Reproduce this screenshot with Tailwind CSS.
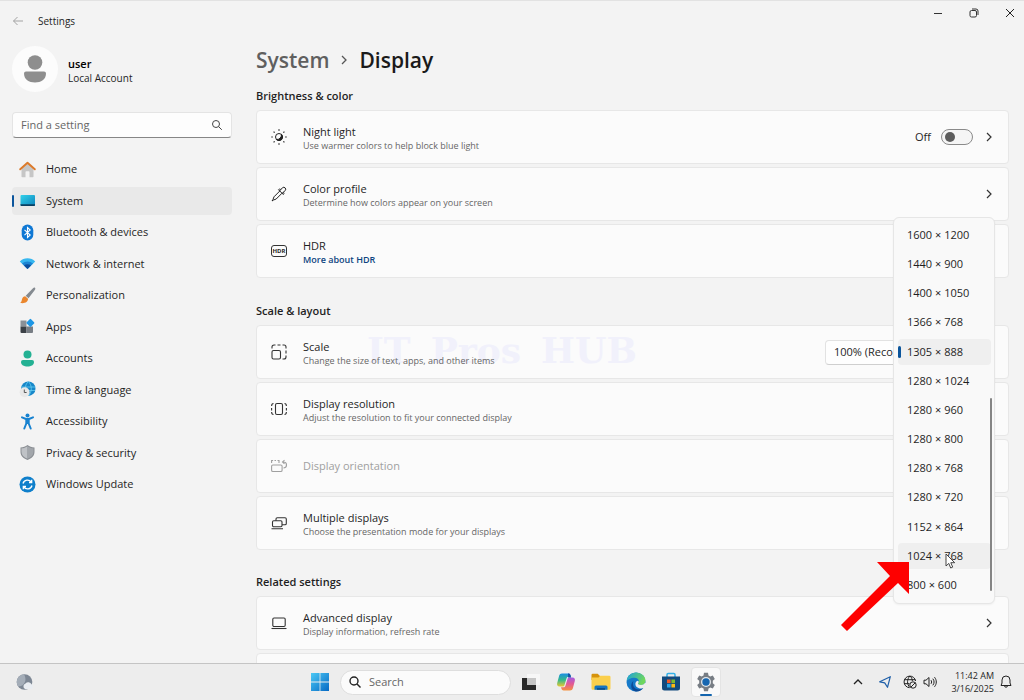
<!DOCTYPE html>
<html lang="en">
<head>
  <meta charset="UTF-8">
  <meta name="viewport" content="width=device-width, initial-scale=1.0">
  <title>Settings - Display</title>
  <script src="https://cdn.jsdelivr.net/npm/@tailwindcss/browser@4"></script>
</head>
<body class="relative h-screen overflow-hidden flex flex-col bg-[#f3f3f3] text-[#1f1f1f] font-['Open_Sans','Noto_Sans',sans-serif] text-[11px] leading-4">

  <!-- Title bar -->
  <header class="h-10 shrink-0 flex justify-between border-t border-[#e2e2e2]">
    <div class="flex items-center gap-[14px] pl-3">
      <button aria-label="Back" class="text-[#a3a3a3]">
        <svg width="12" height="12" viewBox="0 0 12 12" fill="none" stroke="currentColor"><path d="M11 6H1.5M5.5 2 1.5 6l4 4"/></svg>
      </button>
      <span class="text-[10px]">Settings</span>
    </div>
    <div class="flex h-6 items-center gap-[26px] pr-[9px]">
      <button aria-label="Minimize"><svg width="10" height="10" viewBox="0 0 10 10" stroke="#333"><path d="M1 5.5h8"/></svg></button>
      <button aria-label="Restore"><svg width="10" height="10" viewBox="0 0 10 10" fill="none" stroke="#333"><rect x="1" y="2.5" width="6.5" height="6.5" rx="1.5"/><path d="M3 1h4a2 2 0 0 1 2 2v4"/></svg></button>
      <button aria-label="Close"><svg width="10" height="10" viewBox="0 0 10 10" stroke="#222"><path d="m1 1 8 8M9 1 1 9"/></svg></button>
    </div>
  </header>

  <div class="flex-1 min-h-0 flex">
    <!-- Sidebar -->
    <aside class="w-[244px] shrink-0 px-3 pt-1.5">
      <div class="flex items-center gap-[10px]">
        <div class="size-[46px] rounded-full bg-[#fcfcfc] flex items-center justify-center">
          <svg width="24" height="28" viewBox="0 0 24 28" fill="#8e8e8e"><circle cx="12" cy="7.5" r="7.3"/><path d="M3 16.5h18a2 2 0 0 1 2 2c0 6-5 9-11 9s-11-3-11-9a2 2 0 0 1 2-2z"/></svg>
        </div>
        <div class="pt-1 text-[10px] leading-[14px]">
          <p class="text-[11px] font-semibold text-black">user</p>
          <p>Local Account</p>
        </div>
      </div>

      <label class="mt-5 h-[26px] px-2 flex items-center rounded bg-[#fdfdfd] border border-[#e4e4e4] border-b-[#868686]">
        <input type="text" aria-label="Find a setting" placeholder="Find a setting" class="flex-1 min-w-0 outline-none bg-transparent placeholder:text-[#666]">
        <svg width="12" height="12" viewBox="0 0 12 12" fill="none" stroke="#444"><circle cx="5" cy="5" r="3.5"/><path d="m7.6 7.6 3.2 3.2"/></svg>
      </label>

      <nav class="mt-[17px] h-[343px] flex flex-col justify-between">
        <a href="#" class="h-7 pl-[7px] flex items-center gap-[10px] rounded">
          <svg width="17" height="17" viewBox="0 0 17 17"><path d="M2.5 7 8.500 2l6 5v8.500a.8.800 0 0 1-.8.800h-3.200V11a.8.800 0 0 0-.8-.8H7.300a.8.800 0 0 0-.8.800v5.300H3.300a.8.800 0 0 1-.8-.8z" fill="#c6c6c6"/><path d="M1.200 8.300 8.500 1.700l7.300 6.600" fill="none" stroke="#dc7a2a" stroke-width="1.900" stroke-linecap="round" stroke-linejoin="round"/></svg>
          Home
        </a>
        <a href="#" aria-current="page" class="relative h-7 pl-[7px] flex items-center gap-[10px] rounded bg-[#e9e9e9]">
          <span class="absolute left-0 top-2 h-3 w-0.5 rounded bg-[#0b559c]"></span>
          <svg width="17" height="17" viewBox="0 0 17 17"><defs><linearGradient id="scr" x2="1" y2="1"><stop stop-color="#32d2ea"/><stop offset="1" stop-color="#0d83bd"/></linearGradient></defs><rect x="1.500" y="3" width="14.500" height="11" rx="1" fill="url(#scr)"/><path d="M1.500 12.300H16V13a1 1 0 0 1-1 1H2.500a1 1 0 0 1-1-1z" fill="#0a3f62"/></svg>
          System
        </a>
        <a href="#" class="h-7 pl-[7px] flex items-center gap-[10px] rounded">
          <svg width="17" height="17" viewBox="0 0 17 17"><rect x="2.700" y=".5" width="11.600" height="16" rx="5.800" fill="#0f78d4"/><path d="m5.500 5.800 5.700 5.200-2.700 2.500v-10l2.700 2.500-5.700 5.200" fill="none" stroke="#fff" stroke-width="1.100"/></svg>
          Bluetooth &amp; devices
        </a>
        <a href="#" class="h-7 pl-[7px] flex items-center gap-[10px] rounded">
          <svg width="17" height="17" viewBox="0 0 17 17"><path d="M.8 6.500a11 11 0 0 1 15.400 0L8.500 14z" fill="#37b7ef"/><path d="M3 8.600a8 8 0 0 1 11 0L8.500 14z" fill="#1b84d2"/><path d="M5 10.600a5 5 0 0 1 7 0L8.500 14z" fill="#0c4d9c"/></svg>
          Network &amp; internet
        </a>
        <a href="#" class="h-7 pl-[7px] flex items-center gap-[10px] rounded">
          <svg width="17" height="17" viewBox="0 0 17 17"><path d="M16 .8c.6.600.3 1.500-.2 2.200L9.500 11.300 6.700 8.800 14 1.300c.6-.6 1.400-1 2-.5z" fill="#848a90"/><path d="M6.200 9.200 9 11.700c.2 3.200-3.500 5.300-8 4.100 1.600-.6 1.700-2 2-3.500.4-1.900 1.700-3 3.200-3.100z" fill="#ea862d"/></svg>
          Personalization
        </a>
        <a href="#" class="h-7 pl-[7px] flex items-center gap-[10px] rounded">
          <svg width="17" height="17" viewBox="0 0 17 17"><path d="M1.500 2.500h6v6h-6z" fill="#8a9097"/><path d="M1.500 8.500h6v6.500h-5a1 1 0 0 1-1-1z" fill="#3b4046"/><path d="M7.500 8.500H14V14a1 1 0 0 1-1 1H7.500z" fill="#777d84"/><rect x="8.300" y="1.800" width="6.200" height="6.200" rx="1" transform="rotate(45 11.400 4.900)" fill="#1d96e4"/></svg>
          Apps
        </a>
        <a href="#" class="h-7 pl-[7px] flex items-center gap-[10px] rounded">
          <svg width="17" height="17" viewBox="0 0 17 17" fill="#23b193"><circle cx="8.500" cy="4.500" r="4"/><path d="M4 10h9a2 2 0 0 1 2 2c0 3-3 4.500-6.500 4.500S2 15 2 12a2 2 0 0 1 2-2z"/></svg>
          Accounts
        </a>
        <a href="#" class="h-7 pl-[7px] flex items-center gap-[10px] rounded">
          <svg width="17" height="17" viewBox="0 0 17 17"><circle cx="9.300" cy="7.700" r="7.200" fill="#1787c9"/><path d="M2.500 6h13.700M3 9.500h13M9.300.500c-4 4-4 10 0 14.400 4-4.400 4-10.400 0-14.400z" fill="none" stroke="#67cdf0" stroke-width=".8"/><circle cx="5.600" cy="11.200" r="5" fill="#e8e8e8"/><path d="M5.300 8.500v3h2.300" fill="none" stroke="#555" stroke-width="1"/></svg>
          Time &amp; language
        </a>
        <a href="#" class="h-7 pl-[7px] flex items-center gap-[10px] rounded">
          <svg width="17" height="17" viewBox="0 0 17 17"><circle cx="8.500" cy="2.500" r="2" fill="#1782d0"/><path d="M3 4.300 7 6h3l4-1.700M8.500 6v4M7.300 6v4.500L5.300 15.500M9.700 6v4.500l2 5" fill="none" stroke="#1782d0" stroke-width="2" stroke-linecap="round" stroke-linejoin="round"/></svg>
          Accessibility
        </a>
        <a href="#" class="h-7 pl-[7px] flex items-center gap-[10px] rounded">
          <svg width="17" height="17" viewBox="0 0 17 17"><path d="M8.500 1c2 1.500 4.300 2.300 7 2.400v4.400c0 4-2.600 6.500-7 8.200-4.400-1.700-7-4.200-7-8.200V3.400c2.700-.1 5-.9 7-2.400z" fill="#8a8e93"/><path d="M8.500 2.200v12.600c-3.700-1.500-6-3.700-6-7V4.300c2.300-.1 4.300-.9 6-2.100z" fill="#bfc2c6"/><path d="M8.500 2.200v12.600c3.700-1.500 6-3.700 6-7V4.300c-2.300-.1-4.300-.9-6-2.100z" fill="#a2a6ab"/></svg>
          Privacy &amp; security
        </a>
        <a href="#" class="h-7 pl-[7px] flex items-center gap-[10px] rounded">
          <svg width="17" height="17" viewBox="0 0 17 17"><circle cx="8.500" cy="8.500" r="8" fill="#0f7fcb"/><path d="M4 7.500a4.600 4.600 0 0 1 8.300-1.300M12.700 3.800v2.700H10M13 9.500a4.600 4.600 0 0 1-8.300 1.300M4.300 13.200v-2.700H7" fill="none" stroke="#fff" stroke-width="1.300"/></svg>
          Windows Update
        </a>
      </nav>
    </aside>

    <!-- Page content -->
    <main class="flex-1 min-w-0 pl-3 pr-[15px]">
      <h1 class="h-10 flex items-center gap-[11px] text-[21px] leading-7 font-semibold text-[#1a1a1a]">
        <a href="#" class="text-[#5f5f5f]">System</a>
        <svg width="8" height="10" viewBox="0 0 8 10" fill="none" stroke="#555" stroke-width="1.300"><path d="m2 1 4 4-4 4"/></svg>
        Display
      </h1>

      <h2 class="mt-2 mb-1.5 font-semibold">Brightness &amp; color</h2>
      <div class="flex flex-col gap-[3px]">
        <section class="h-[54px] pl-[14px] pr-[13px] flex items-center gap-4 rounded bg-[#fbfbfb] border border-[#e7e7e7]">
          <svg width="16" height="16" viewBox="0 0 16 16" fill="none" stroke="#222"><circle cx="8" cy="8" r="3.500"/><path d="M10.500 5.500a3.500 3.500 0 1 1-5 5c3 .2 5-2 5-5z" fill="#222"/><path d="M8 .3v1.500M8 14.200v1.500M.3 8h1.500M14.200 8h1.500M2.600 2.600l1 1M12.400 12.400l1 1M13.400 2.600l-1 1M3.600 12.400l-1 1" stroke-width="1.200"/></svg>
          <div class="flex-1 pt-[3px] leading-[14px]">
            <h3 id="night-light">Night light</h3>
            <p class="text-[9px] text-[#666]">Use warmer colors to help block blue light</p>
          </div>
          <div class="flex items-center gap-[10px]">
            <span>Off</span>
            <button role="switch" aria-checked="false" aria-labelledby="night-light" class="w-8 h-4 px-[3px] flex items-center rounded-full border border-[#8a8a8a] bg-[#f5f5f5]"><span class="size-2.5 rounded-full bg-[#5c5c5c]"></span></button>
            <svg width="12" height="12" viewBox="0 0 12 12" fill="none" stroke="#333" stroke-width="1.200"><path d="m4 2 4 4-4 4"/></svg>
          </div>
        </section>
        <section class="h-[54px] pl-[14px] pr-[13px] flex items-center gap-4 rounded bg-[#fbfbfb] border border-[#e7e7e7]">
          <svg width="16" height="16" viewBox="0 0 16 16" fill="none" stroke="#222" stroke-linejoin="round"><path d="M8.800 5 3 10.800 1.900 13.700l-.9 1.300 1.300-.9 2.900-1.100L11 7.200M7.500 3.700l4.800 4.800M8.700 4.900l2.800-3.200a2 2 0 0 1 2.800 2.800L11.100 7.300"/><path d="M7.500 3.700c.8-.9 1.600-.7 2.300-.1M12.300 8.500c.9-.8.7-1.600.1-2.300"/></svg>
          <div class="flex-1 pt-[3px] leading-[14px]">
            <h3>Color profile</h3>
            <p class="text-[9px] text-[#666]">Determine how colors appear on your screen</p>
          </div>
          <svg width="12" height="12" viewBox="0 0 12 12" fill="none" stroke="#333" stroke-width="1.200"><path d="m4 2 4 4-4 4"/></svg>
        </section>
        <section class="h-[54px] pl-[14px] pr-4 flex items-center gap-4 rounded bg-[#fbfbfb] border border-[#e7e7e7]">
          <span class="w-4 h-3 flex items-center justify-center rounded-[3px] border border-[#333] text-[6px] leading-none font-bold">HDR</span>
          <div class="flex-1 pt-[3px] leading-[14px]">
            <h3>HDR</h3>
            <a href="#" class="block text-[9px] font-semibold text-[#0c4480]">More about HDR</a>
          </div>
        </section>
      </div>

      <h2 class="mt-[25px] mb-1.5 font-semibold">Scale &amp; layout</h2>
      <div class="flex flex-col gap-[3px]">
        <section class="relative h-[54px] pl-[14px] pr-4 flex items-center gap-4 rounded bg-[#fbfbfb] border border-[#e7e7e7]">
          <div aria-hidden="true" class="absolute left-[110px] top-1 flex gap-5 font-['DejaVu_Serif',serif] font-bold text-[36px] leading-10 text-[#f1f1fb]"><span>IT</span><span>Pros</span><span>HUB</span></div>
          <svg width="16" height="16" viewBox="0 0 16 16" fill="none" stroke="#333" stroke-width="1.100"><rect x="1" y="6.500" width="8.500" height="8.500" rx="1.500"/><path d="M1 4.500V3a2 2 0 0 1 2-2h1.500M6.500 1h3M11.500 1H13a2 2 0 0 1 2 2v1.500M15 6.500v3M15 11.500V13a2 2 0 0 1-2 2h-1.500"/></svg>
          <div class="relative flex-1 pt-[3px] leading-[14px]">
            <h3 id="scale">Scale</h3>
            <p class="text-[9px] text-[#666]">Change the size of text, apps, and other items</p>
          </div>
          <select aria-labelledby="scale" class="appearance-none w-[167px] h-[25px] pl-2 rounded border border-[#e2e2e2] border-b-[#cfcfcf] bg-[#fefefe]">
            <option>100% (Recommended)</option>
          </select>
        </section>
        <section class="h-[54px] pl-[14px] pr-4 flex items-center gap-4 rounded bg-[#fbfbfb] border border-[#e7e7e7]">
          <svg width="16" height="16" viewBox="0 0 16 16" fill="none" stroke="#333" stroke-width="1.100"><rect x="4.500" y="2.500" width="7" height="11" rx="1.500"/><path d="M2.500 2.500C1 2.500.600 3.200.600 5M.600 7v2.500M.600 11c0 1.800.4 2.500 1.900 2.500M13.500 2.500c1.500 0 1.900.7 1.900 2.500M15.400 7v2.500M15.400 11c0 1.800-.4 2.500-1.900 2.500"/></svg>
          <div class="flex-1 pt-[3px] leading-[14px]">
            <h3>Display resolution</h3>
            <p class="text-[9px] text-[#666]">Adjust the resolution to fit your connected display</p>
          </div>
        </section>
        <section class="h-[54px] pl-[14px] pr-4 flex items-center gap-4 rounded bg-[#fbfbfb] border border-[#e7e7e7] text-[#a0a0a0]">
          <svg width="16" height="16" viewBox="0 0 16 16" fill="none" stroke="currentColor" stroke-width="1.100"><rect x=".6" y="7" width="10.500" height="6.500" rx="1.300"/><path d="M.600 5V2.500h1.500M3.500 2.500h1.500M6.500 2.500H8V5M13.500 2.200l-2 1.800 2 1.800M11.700 4h.8a2.800 2.800 0 0 1 0 6"/></svg>
          <h3 class="flex-1 leading-[14px]">Display orientation</h3>
        </section>
        <section class="h-[54px] pl-[14px] pr-4 flex items-center gap-4 rounded bg-[#fbfbfb] border border-[#e7e7e7]">
          <svg width="16" height="16" viewBox="0 0 16 16" fill="none" stroke="#333" stroke-width="1.100"><rect x="1.500" y="5.800" width="9.500" height="6" rx="1.200"/><path d="M.500 13.700h11.500M5 5.800V4a1.300 1.300 0 0 1 1.300-1.300h7.700A1.300 1.300 0 0 1 15.300 4v4.500A1.300 1.300 0 0 1 14 9.800h-3"/></svg>
          <div class="flex-1 pt-[3px] leading-[14px]">
            <h3>Multiple displays</h3>
            <p class="text-[9px] text-[#666]">Choose the presentation mode for your displays</p>
          </div>
        </section>
      </div>

      <h2 class="mt-6 mb-1.5 font-semibold">Related settings</h2>
      <div class="flex flex-col gap-[3px]">
        <section class="h-[54px] pl-[14px] pr-[13px] flex items-center gap-4 rounded bg-[#fbfbfb] border border-[#e7e7e7]">
          <svg width="16" height="16" viewBox="0 0 16 16" fill="none" stroke="#333" stroke-width="1.100"><rect x="1.800" y="3" width="12.400" height="8.500" rx="1.200"/><path d="M.500 13.500h15"/></svg>
          <div class="flex-1 pt-[3px] leading-[14px]">
            <h3>Advanced display</h3>
            <p class="text-[9px] text-[#666]">Display information, refresh rate</p>
          </div>
          <svg width="12" height="12" viewBox="0 0 12 12" fill="none" stroke="#333" stroke-width="1.200"><path d="m4 2 4 4-4 4"/></svg>
        </section>
        <section class="h-[54px] rounded bg-[#fbfbfb] border border-[#e7e7e7]"></section>
      </div>
    </main>
  </div>

  <!-- Resolution list -->
  <div class="absolute right-[29px] top-[217px] w-[102px] h-[387px] py-1 pl-1 pr-[3px] flex rounded-md bg-[#f9f9f9] border border-[#e6e6e6] shadow-xs">
    <div role="listbox" aria-label="Display resolution" class="flex-1 h-[376px] flex flex-col justify-between">
      <button role="option" class="h-[26px] pl-[9px] text-left rounded">1600 × 1200</button>
      <button role="option" class="h-[26px] pl-[9px] text-left rounded">1440 × 900</button>
      <button role="option" class="h-[26px] pl-[9px] text-left rounded">1400 × 1050</button>
      <button role="option" class="h-[26px] pl-[9px] text-left rounded">1366 × 768</button>
      <button role="option" aria-selected="true" class="relative h-[26px] pl-[9px] text-left rounded bg-[#efefef]"><span class="absolute left-0 top-[7px] h-3 w-[3px] rounded bg-[#0b559c]"></span>1305 × 888</button>
      <button role="option" class="h-[26px] pl-[9px] text-left rounded">1280 × 1024</button>
      <button role="option" class="h-[26px] pl-[9px] text-left rounded">1280 × 960</button>
      <button role="option" class="h-[26px] pl-[9px] text-left rounded">1280 × 800</button>
      <button role="option" class="h-[26px] pl-[9px] text-left rounded">1280 × 768</button>
      <button role="option" class="h-[26px] pl-[9px] text-left rounded">1280 × 720</button>
      <button role="option" class="h-[26px] pl-[9px] text-left rounded">1152 × 864</button>
      <button role="option" class="h-[26px] pl-[9px] text-left rounded bg-[#efefef]">1024 × 768</button>
      <button role="option" class="h-[26px] pl-[9px] text-left rounded">800 × 600</button>
    </div>
    <span class="absolute right-0.5 top-[180px] w-0.5 h-[193px] rounded bg-[#858585]"></span>
    <!-- pointer and red arrow -->
    <svg class="absolute left-[51px] top-[335px]" width="11" height="17" viewBox="0 0 11 17"><path d="M1 1v12l2.800-2.600 1.900 4.600 2-.9-1.900-4.400h3.900z" fill="#fff" stroke="#333" stroke-width=".9"/></svg>
    <svg class="absolute -left-[54px] top-[344px]" width="70" height="70" viewBox="0 0 70 70"><path d="M37 0h32v32L58 21 7 69l-6-6 49-49z" fill="#fe0000"/></svg>
  </div>

  <!-- Taskbar -->
  <footer class="relative h-[37px] shrink-0 grid grid-cols-[1fr_auto_1fr] items-center bg-[#ededed] border-t border-[#c4c4c4]">
    <button aria-label="Widgets" class="ml-4 w-[18px]">
      <svg width="18" height="18" viewBox="0 0 18 18"><circle cx="8.500" cy="9" r="7.800" fill="#7d8794"/><path d="M8 1.200a7.800 7.800 0 0 0-6 12c5 1 10-5 6-12z" fill="#a4adb8"/><path d="M9 16a3 3 0 0 1 .5-5.500 3.500 3.500 0 0 1 6 .8A2.500 2.500 0 0 1 15 16z" fill="#e9edf2"/></svg>
    </button>
    <div class="pl-0.5 flex items-center gap-[5px]">
      <button aria-label="Start" class="size-[30px] flex items-center justify-center">
        <svg width="18" height="18" viewBox="0 0 18 18"><defs><linearGradient id="win" gradientUnits="userSpaceOnUse" x2="18" y2="18"><stop stop-color="#4cc9f5"/><stop offset="1" stop-color="#0669c4"/></linearGradient></defs><path d="M0 0h8.600v8.600H0zM9.400 0H18v8.600H9.400zM0 9.400h8.600V18H0zM9.400 9.400H18V18H9.400z" fill="url(#win)"/></svg>
      </button>
      <label class="w-[171px] h-[25px] px-2 flex items-center gap-2 rounded-full bg-[#fbfbfb] border border-[#dedede]">
        <svg width="12" height="12" viewBox="0 0 12 12" fill="none" stroke="#222" stroke-width="1.400"><circle cx="5" cy="5" r="4"/><path d="m8 8 3.500 3.500"/></svg>
        <input type="search" aria-label="Search" placeholder="Search" class="flex-1 min-w-0 outline-none bg-transparent placeholder:text-[#666]">
      </label>
      <button aria-label="Task view" class="size-[30px] flex items-center justify-center">
        <svg width="20" height="20" viewBox="0 0 20 20"><path d="M1 6h14v12H1z" fill="#2a2a2a"/><path d="M6 2h13v11H6z" fill="#f7f7f7"/><path d="M6 6h9v7H6z" fill="#c6c6c6"/></svg>
      </button>
      <button aria-label="Copilot" class="size-[30px] flex items-center justify-center">
        <svg width="20" height="20" viewBox="0 0 20 20"><defs><linearGradient id="cpa" x2="0" y2="1"><stop stop-color="#1a8fe3"/><stop offset=".5" stop-color="#35b98a"/><stop offset="1" stop-color="#e9c832"/></linearGradient><linearGradient id="cpb" x2="0" y2="1"><stop stop-color="#a45be0"/><stop offset=".5" stop-color="#e35a93"/><stop offset="1" stop-color="#f59140"/></linearGradient></defs><path d="M6 1.500h6.500c1 0 1.600.6 2 1.700l.5 1.600h-2.500c-1.200 0-1.700.7-2 1.800L8.500 13c-.3 1-.9 1.500-2 1.500H3.500C1.500 14.500.700 13 1.200 11l2-7.500c.4-1.300 1.300-2 2.800-2z" fill="url(#cpa)"/><path d="M14 18.500H7.500c-1 0-1.600-.6-2-1.700L5 15.200h2.500c1.200 0 1.700-.7 2-1.800l2-6.400c.3-1 .9-1.500 2-1.500h3c2 0 2.800 1.500 2.300 3.500l-2 7.500c-.4 1.300-1.300 2-2.800 2z" fill="url(#cpb)"/><path d="M12 1.500h.5c1 0 1.600.6 2 1.700l.6 2.200h-3z" fill="#184fa8"/></svg>
      </button>
      <button aria-label="File Explorer" class="size-[30px] flex items-center justify-center">
        <svg width="20" height="20" viewBox="0 0 20 20"><path d="M.500 3a1.200 1.200 0 0 1 1.200-1.200h5L9 4v4H.500z" fill="#d6930c"/><path d="M.500 5.500h7L9.200 3.700h9a1.300 1.300 0 0 1 1.300 1.300v11.500a1.300 1.300 0 0 1-1.300 1.300H1.800a1.300 1.300 0 0 1-1.300-1.300z" fill="#fbcf4c"/><path d="M3.500 17.800V15a1.500 1.500 0 0 1 1.500-1.500h10a1.500 1.500 0 0 1 1.500 1.500v2.800z" fill="#1674c0"/><path d="M6 16h8v1.800H6z" fill="#0c4f8e"/></svg>
      </button>
      <button aria-label="Edge" class="size-[30px] flex items-center justify-center">
        <svg width="20" height="20" viewBox="0 0 20 20"><defs><linearGradient id="edg" x2="1" y2=".4"><stop stop-color="#1a9fe0"/><stop offset="1" stop-color="#6fd75c"/></linearGradient></defs><circle cx="10" cy="10" r="9.500" fill="#1579c9"/><path d="M.600 9C1.200 4 5 .5 10 .5c5.500 0 9.500 4 9.500 8 0 3-2 4.500-4.500 4.500-2 0-3-.8-3-1.500s.8-1 .8-2.300C12.800 7.300 11 5.800 8.500 5.800 4.500 5.800 1.500 8 .600 9z" fill="url(#edg)"/><path d="M7.500 9c-2 4 1 8.500 5 8.500 2 0 3.800-.8 5-2C15.500 18.800 12 20 9 19.300 4.500 18 4 11.500 7.500 9z" fill="#0d4a96"/><path d="M12 11.500c0 .7 1 1.500 3 1.500 1.700 0 3.100-.7 3.900-2l1.100 0c0 1.700-.6 3.300-1.600 4.700-3.500 1.800-9 .3-9-3.700 0-1.300.6-2.500 1.800-3.300 1 .2 1.600.7 1.600 1.300 0 .5-.8.800-.8 1.500z" fill="#ededed"/></svg>
      </button>
      <button aria-label="Store" class="size-[30px] flex items-center justify-center">
        <svg width="20" height="20" viewBox="0 0 20 20"><path d="M6 5V2.700A1.200 1.200 0 0 1 7.200 1.500h5.600A1.200 1.200 0 0 1 14 2.700V5" fill="none" stroke="#33b0e8" stroke-width="1.500"/><path d="M1 4.500h18V16a2.500 2.500 0 0 1-2.500 2.500h-13A2.500 2.500 0 0 1 1 16z" fill="#124a7e"/><path d="M6 7.500h3.600v3.600H6z" fill="#f05a28"/><path d="M10.400 7.500H14v3.600h-3.600z" fill="#7cbb2e"/><path d="M6 11.900h3.600v3.600H6z" fill="#28a8ea"/><path d="M10.400 11.900H14v3.600h-3.600z" fill="#fdb913"/></svg>
      </button>
      <button aria-label="Settings" class="relative size-[30px] flex items-center justify-center rounded bg-[#f9f9f9] border border-[#e4e4e4]">
        <svg width="20" height="20" viewBox="0 0 20 20"><path d="m8 .8-.5 2.600-1.800 1L3.200 3.500 1.200 7l2 1.800v2.400l-2 1.800 2 3.500 2.500-.9 1.800 1 .5 2.600h4l.5-2.600 1.800-1 2.500.9 2-3.500-2-1.800V8.800l2-1.800-2-3.500-2.500.9-1.800-1L12 .8z" fill="#777d84"/><circle cx="10" cy="10" r="5" fill="#e3e7ea"/><circle cx="10" cy="10" r="3.700" fill="#1666b0"/></svg>
        <span class="absolute bottom-0 left-2 w-3 h-0.5 rounded bg-[#1264ae]"></span>
      </button>
    </div>
    <div class="pr-3 flex items-center justify-end text-[9px] leading-[13px]">
      <button aria-label="Hidden icons" class="mr-4"><svg width="10" height="10" viewBox="0 0 10 10" fill="none" stroke="#222" stroke-width="1.300"><path d="m1 7 4-4 4 4"/></svg></button>
      <button aria-label="Location" class="mr-3"><svg width="12" height="12" viewBox="0 0 12 12" fill="none" stroke="#1f5fa8" stroke-width="1.200" stroke-linejoin="round"><path d="M11.300.700.700 5.800l5 1.100 2.800 4.400z"/></svg></button>
      <button aria-label="Network and volume" class="mr-[14px] flex items-center gap-1.5">
        <svg width="14" height="14" viewBox="0 0 14 14" fill="none" stroke="#222"><path d="M6.500 12.700A5.800 5.800 0 1 1 12.600 6M1.200 4.700h11M1 8.700h5.500M6.800 1c-3 3.500-3 8 0 11.500M7.200 1c1.300 1.400 2 3 2.200 5"/><circle cx="10" cy="10" r="3.200"/><path d="m7.800 12.200 4.400-4.400"/></svg>
        <svg width="14" height="12" viewBox="0 0 14 12" fill="none" stroke="#222" stroke-linejoin="round"><path d="M1 4.200h2L6 1.500v9L3 7.800H1zM8 4.200c.8 1 .8 2.600 0 3.600M9.800 2.700c1.700 2 1.700 4.600 0 6.600M11.500 1.200c2.400 3 2.400 6.600 0 9.600"/></svg>
      </button>
      <button class="mr-1.5 text-right">11:42 AM<br>3/16/2025</button>
      <button aria-label="Notifications"><svg width="12" height="14" viewBox="0 0 12 14" fill="none" stroke="#222" stroke-linejoin="round"><path d="M6 1a4 4 0 0 0-4 4v3L1 10.500h10L10 8V5a4 4 0 0 0-4-4zM4.500 10.700a1.500 1.500 0 0 0 3 0"/></svg></button>
    </div>
  </footer>
</body>
</html>
